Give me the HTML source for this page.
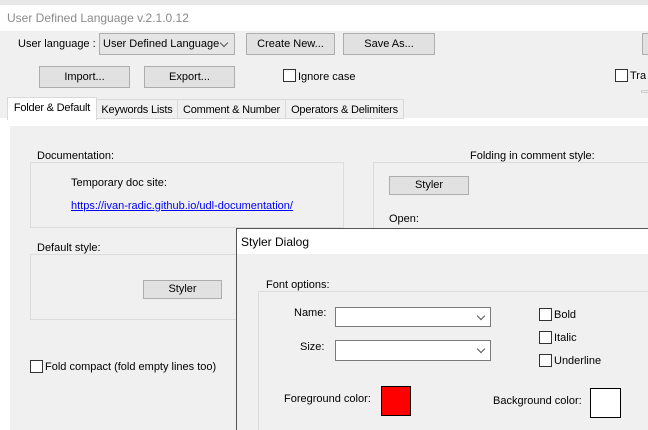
<!DOCTYPE html>
<html><head><style>
*{margin:0;padding:0;box-sizing:border-box}
html,body{width:648px;height:430px;overflow:hidden}
body{background:#f0f0f0;font-family:"Liberation Sans",sans-serif;font-size:11px;color:#000;position:relative}
.a{position:absolute;white-space:nowrap}
.btn{position:absolute;background:#e1e1e1;border:1px solid #adadad;text-align:center}
.cb{position:absolute;width:13px;height:13px;border:1px solid #333;background:#fff}
.grp{position:absolute;border:1px solid #dcdcdc}
.lbl{position:absolute;background:#f0f0f0;padding:0 2px;white-space:nowrap}
.combo{position:absolute;background:#fff;border:1px solid #7a7a7a;overflow:hidden}
.chev{position:absolute;right:6px;top:5px;width:6px;height:6px;border-right:1px solid #555;border-bottom:1px solid #555;transform:rotate(45deg)}
.tab{position:absolute;top:99px;height:20px;background:#f0f0f0;border:1px solid #d9d9d9;padding-top:4px;text-align:center;letter-spacing:-0.2px;overflow:hidden;white-space:nowrap}
</style></head><body>
<div class="a" style="left:0;top:0;width:648px;height:5px;background:#e8e8e8"></div>
<div class="a" style="left:0;top:5px;width:648px;height:26px;background:#fff"></div>
<div class="a" style="left:7px;top:11px;font-size:12px;color:#8a8a8a">User Defined Language v.2.1.0.12</div>

<div class="a" style="left:18px;top:38px">User language :</div>
<div class="combo" style="left:99px;top:33px;width:136px;height:22px;border-color:#adadad;background:#e5e5e5"><span class="a" style="left:3px;top:4px">User Defined Language</span><div class="chev" style="top:6px;right:7px"></div></div>
<div class="btn" style="left:246px;top:33px;width:89px;height:22px;line-height:20px">Create New...</div>
<div class="btn" style="left:343px;top:33px;width:92px;height:22px;line-height:20px">Save As...</div>
<div class="btn" style="left:642px;top:33px;width:20px;height:22px"></div>

<div class="btn" style="left:39px;top:66px;width:91px;height:22px;line-height:20px">Import...</div>
<div class="btn" style="left:144px;top:66px;width:91px;height:22px;line-height:20px">Export...</div>
<div class="cb" style="left:283px;top:69px"></div>
<div class="a" style="left:298px;top:71px">Ignore case</div>
<div class="cb" style="left:615px;top:69px"></div>
<div class="a" style="left:630px;top:70px">Tra</div>
<div class="a" style="left:641px;top:90px;width:10px;height:3px;border:1px solid #ccc"></div>

<div class="a" style="left:0;top:118px;width:648px;height:312px;background:#fff"></div>
<div class="a" style="left:10px;top:126px;width:640px;height:304px;background:#f0f0f0"></div>
<div class="tab" style="left:96px;width:82px">Keywords Lists</div>
<div class="tab" style="left:177px;width:109px">Comment &amp; Number</div>
<div class="tab" style="left:285px;width:119px">Operators &amp; Delimiters</div>
<div class="a" style="left:7px;top:97px;width:90px;height:23px;background:#fff;border:1px solid #d9d9d9;border-bottom:none;padding:4px 0 0 0;text-align:center;letter-spacing:-0.2px">Folder &amp; Default</div>

<div class="grp" style="left:30px;top:162px;width:314px;height:66px"></div>
<div class="lbl" style="left:35px;top:150px">Documentation:</div>
<div class="a" style="left:71px;top:177px">Temporary doc site:</div>
<div class="a" style="left:71px;top:200px;color:#0000ff;text-decoration:underline">https://ivan-radic.github.io/udl-documentation/</div>

<div class="grp" style="left:373px;top:162px;width:290px;height:80px"></div>
<div class="lbl" style="left:468px;top:150px">Folding in comment style:</div>
<div class="btn" style="left:389px;top:176px;width:80px;height:19px;line-height:17px">Styler</div>
<div class="a" style="left:389px;top:213px">Open:</div>

<div class="grp" style="left:30px;top:254px;width:220px;height:66px"></div>
<div class="lbl" style="left:35px;top:242px">Default style:</div>
<div class="btn" style="left:143px;top:280px;width:79px;height:19px;line-height:17px">Styler</div>

<div class="cb" style="left:30px;top:360px"></div>
<div class="a" style="left:45px;top:361px">Fold compact (fold empty lines too)</div>

<div class="a" style="left:236px;top:228px;width:420px;height:210px;border:1px solid #555;background:#f0f0f0">
 <div class="a" style="left:0;top:0;width:420px;height:25px;background:#fff"></div>
 <div class="a" style="left:4px;top:6px;font-size:12px">Styler Dialog</div>
</div>
<div class="grp" style="left:258px;top:291px;width:400px;height:150px"></div>
<div class="lbl" style="left:264px;top:279px">Font options:</div>
<div class="a" style="left:294px;top:307px">Name:</div>
<div class="combo" style="left:335px;top:307px;width:156px;height:20px"><div class="chev"></div></div>
<div class="a" style="left:300px;top:341px">Size:</div>
<div class="combo" style="left:335px;top:340px;width:156px;height:21px"><div class="chev"></div></div>
<div class="cb" style="left:539px;top:308px"></div><div class="a" style="left:554px;top:309px">Bold</div>
<div class="cb" style="left:539px;top:331px"></div><div class="a" style="left:554px;top:332px">Italic</div>
<div class="cb" style="left:539px;top:354px"></div><div class="a" style="left:554px;top:355px">Underline</div>
<div class="a" style="left:284px;top:393px">Foreground color:</div>
<div class="a" style="left:381px;top:386px;width:30px;height:30px;background:#ff0000;border:1px solid #000"></div>
<div class="a" style="left:493px;top:395px">Background color:</div>
<div class="a" style="left:590px;top:388px;width:31px;height:30px;background:#fff;border:1px solid #000"></div>
</body></html>
